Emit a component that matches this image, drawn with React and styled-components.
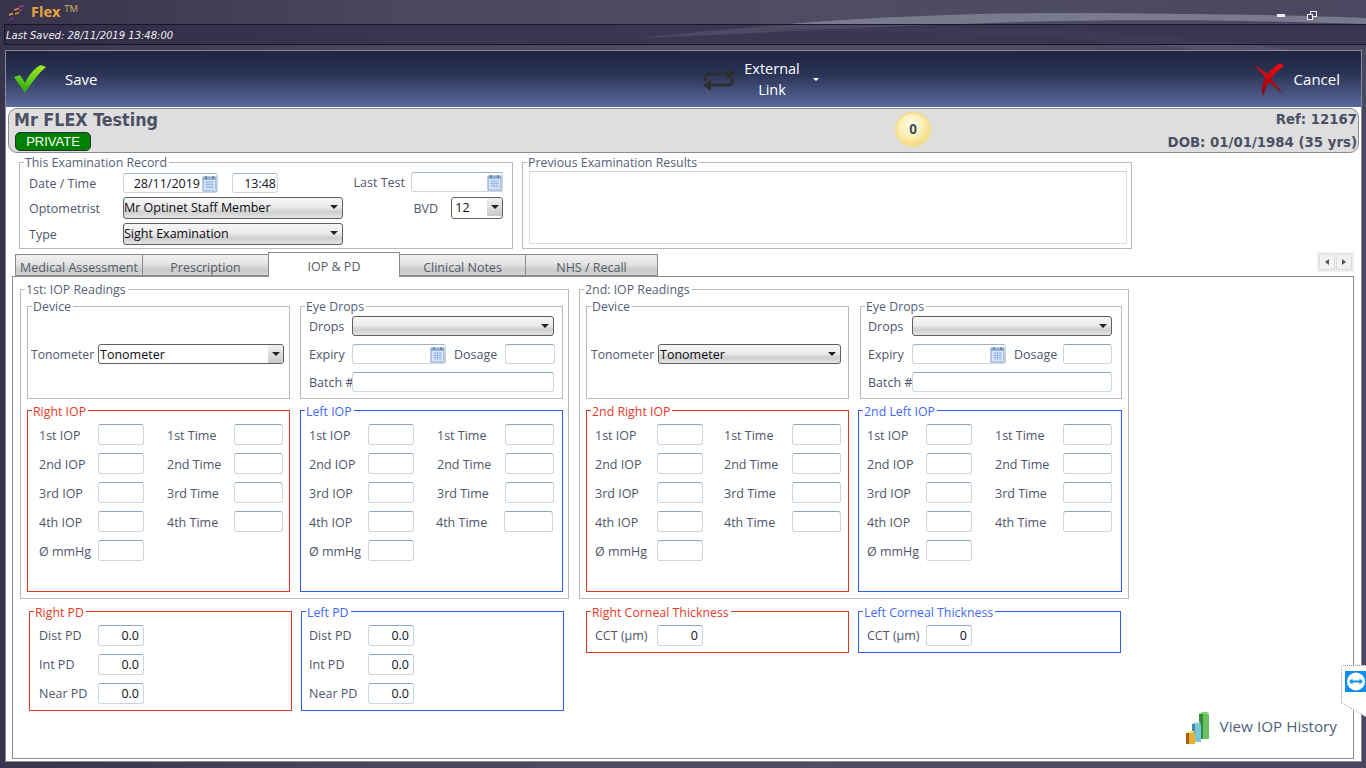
import React from "react";
import styled, { createGlobalStyle } from "styled-components";

const Global = createGlobalStyle`
  html, body { margin: 0; padding: 0; width: 1366px; height: 768px; overflow: hidden; background: #2b2a40; }
  * { box-sizing: border-box; }
  body { font-family: "Open Sans", "Noto Sans", sans-serif; font-size: 12.5px; color: #4d5268; }
`;

const Screen = styled.div`
  position: relative; width: 1366px; height: 768px; overflow: hidden;
  display: flex; flex-direction: column;
  background: linear-gradient(90deg, #37344c 0%, #4a485e 30%, #4f4d62 60%, #4a4860 100%);
`;
const Swoosh = styled.svg`position: absolute; left: 0; top: 0; pointer-events: none;`;
const TitleBar = styled.div`
  position: relative; height: 24px; flex: none; display: flex; align-items: center; padding-left: 8px;
`;
const AppName = styled.span`
  margin-left: 6px; font: bold 14.5px/24px "Open Sans", sans-serif; color: #e8a63c;
`;
const Trade = styled.span`
  margin-left: 4px; margin-bottom: 6px; font: 9.5px/10px "Open Sans", sans-serif; color: #d9a860;
`;
const WindowButtons = styled.div`
  margin-left: auto; margin-right: 49px; display: flex; align-items: center; gap: 22px; padding-top: 6px;
`;
const MinimizeMark = styled.span`display: block; width: 8px; height: 3px; background: #f0f0f0;`;
const StatusBar = styled.div`
  position: relative; flex: none; height: 21px; margin: 0 0 0 4px; padding: 1px 0 0 1px;
  border: 1px solid #17172a; border-right: 0;
  background: rgba(46, 42, 72, .6);
  font: italic 10px/19px "DejaVu Sans", sans-serif; color: #f0f0f0;
`;
const Main = styled.div`
  position: relative; flex: none; width: 1357px; height: 712px; margin: 5px 0 0 5px;
  border: 1px solid #8a8a98; background: #fff; display: flex; flex-direction: column;
`;
const Toolbar = styled.div`
  flex: none; height: 56px; display: grid; grid-template-columns: 697px auto 1fr; align-items: center;
  background: linear-gradient(180deg, #1f2540 0%, #2a3354 40%, #5b6a9e 100%);
  color: #fff; font-size: 15px;
`;
const SaveAction = styled.div`display: flex; align-items: center; gap: 18px; padding-left: 8px;`;
const LinkAction = styled.div`display: flex; align-items: center; gap: 4px;`;
const LinkText = styled.div`width: 66px; text-align: center; line-height: 21px; font-size: 14.5px;`;
const Caret = styled.span`
  width: 0; height: 0; border-left: 3px solid transparent; border-right: 3px solid transparent;
  border-top: 3px solid #fff; margin-left: 4px;
`;
const CancelAction = styled.div`display: flex; align-items: center; gap: 10px; justify-self: end; padding-right: 21px;`;

const Patient = styled.div`
  flex: none; margin: 1px 2px 0 2px; height: 45px; border: 1px solid #8c8c8c; border-radius: 9px;
  background: #dedede; display: grid; grid-template-columns: 880px auto 1fr; align-items: start;
  padding: 0 1px 0 5px;
`;
const PatientName = styled.div`
  font: bold 17.75px/22px "DejaVu Sans Condensed", "DejaVu Sans", sans-serif; color: #4b5064;
`;
const PrivateBadge = styled.div`
  width: 76px; height: 19px; margin-top: 1px; margin-left: 1px; background: #008000; border: 1px solid #24352a; border-radius: 5px;
  color: #fff; font: 13px/17px "Liberation Sans", sans-serif; text-align: center;
`;
const Coin = styled.div`
  width: 36px; height: 35px; margin-top: 3px; margin-left: 1px; border-radius: 50%; border: 2px solid #f4e08c;
  background: radial-gradient(circle at 45% 35%, #fffdf0 0%, #fbeeb4 45%, #eecb60 100%);
  font: bold 13.5px/31px "Open Sans", sans-serif; color: #444a5c; text-align: center;
`;
const PatientMeta = styled.div`
  margin-top: -2px; text-align: right; font: bold 14.8px/23px "DejaVu Sans Condensed", "DejaVu Sans", sans-serif; color: #4b5064;
`;

const Body = styled.div`flex: 1; min-height: 0; display: flex; flex-direction: column; padding: 1px 0 0 0;`;
const TopRow = styled.div`flex: none; display: grid; grid-template-columns: 494px 610px; gap: 9px; margin-left: 13px; height: 95px;`;

const Group = styled.fieldset`
  margin: 0 0 0 ${(p) => p.$shift ?? 0}px; min-width: 0; padding: 0 ${(p) => p.$right ?? 0}px 0 ${(p) => p.$left ?? 0}px;
  height: ${(p) => p.$h}px;
  border: 1px solid ${(p) => (p.$tone === "red" ? "#d83a22" : p.$tone === "blue" ? "#2f5cf2" : "#b9b9b9")};
`;
const Legend = styled.legend`
  margin-left: ${(p) => p.$indent ?? 4}px; padding: 0 2px 0 1px; font-size: 12.35px; height: 16px;
  line-height: ${(p) => (p.$low ? 20 : 18)}px;
  color: ${(p) => (p.$tone === "red" ? "#e53a2a" : p.$tone === "blue" ? "#3f68f4" : "#556078")};
`;
const RecordGrid = styled.div`
  display: grid; grid-template-columns: 94px 220px 1fr; grid-template-rows: 20px 22px 22px;
  row-gap: 4px; align-items: center; padding: 3px 9px 0 9px;
`;
const DateTimeCell = styled.div`display: flex; gap: 14px;`;
const SideCell = styled.div`
  display: flex; justify-content: flex-end; align-items: center; gap: ${(p) => p.$gap}px; margin-top: ${(p) => p.$lift ?? 0}px;
`;
const Label = styled.span`white-space: nowrap; color: #4f556c;`;
const IopLabel = styled(Label)`
  padding-top: 2px; margin-left: ${(p) => (p.$nudge ? -1 : 0)}px;
`;
const DeviceLabel = styled(Label)`font-size: 12.2px;`;

const Field = styled.input`
  display: block; width: ${(p) => p.$w}px; height: ${(p) => p.$hh ?? 21}px; padding: 0 4px;
  margin: 0 0 0 ${(p) => (p.$nudge ? -1 : 0)}px;
  border: 1px solid #c9d6e2; border-top-color: #8fa5bb; border-radius: 3px; background: #fff; outline: 0;
  font: 12.5px "Open Sans", sans-serif; color: #10131c; text-align: right;
`;
const DateBox = styled.div`
  width: ${(p) => p.$w}px; height: 20px; display: flex; align-items: center; justify-content: flex-end; gap: 2px;
  padding-right: ${(p) => p.$end ?? 0}px; border: 1px solid #c9d6e2; border-top-color: #9fb3c6; border-radius: 3px; background: #fff;
  font-size: 12.5px; color: #10131c;
`;
const Drop = styled.div`
  width: ${(p) => p.$w}px; height: ${(p) => p.$hh}px; display: flex; align-items: center; overflow: hidden;
  padding: ${(p) => (p.$tight ? "0 0 2px 0" : "0 0 0 1px")}; border: 1px solid #5f5f5f; border-radius: 3px; font-size: 12.5px; color: #0b0b12;
  background: ${(p) => (p.$plain ? "#fff" : "linear-gradient(180deg, #f6f6f6 0%, #ececec 45%, #cfcfcf 70%, #e4e4e4 100%)")};
`;
const DropText = styled.span`flex: 1; white-space: nowrap;`;
const DropArrow = styled.span`
  flex: none; align-self: stretch; width: ${(p) => (p.$boxed ? 15 : 17)}px; display: flex; align-items: center; justify-content: center;
  background: ${(p) => (p.$boxed ? "linear-gradient(180deg, #f2f2f2, #c9c9c9)" : "transparent")};
  &::after { content: ""; border-left: 4px solid transparent; border-right: 4px solid transparent; border-top: 4px solid #222; }
`;

const ResultsBox = styled.div`height: 73px; margin: 1px 4px 0 6px; border: 1px solid #dcdcdc; border-top-color: #cfcfcf;`;

const TabStrip = styled.div`
  position: relative; flex: none; height: 24px; margin: 3px 0 0 9px; padding-right: 7px; display: flex; align-items: flex-end; z-index: 1;
`;
const Tab = styled.div`
  width: ${(p) => p.$w}px; height: ${(p) => (p.$active ? 25 : 22)}px;
  margin: 0 0 ${(p) => (p.$active ? -1 : 0)}px ${(p) => (p.$active ? -1 : 0)}px;
  border: 1px solid #8b8b8b; border-left-width: ${(p) => (p.$first || p.$active ? 1 : 0)}px;
  border-bottom: ${(p) => (p.$active ? "0" : "1px solid #8b8b8b")};
  background: ${(p) => (p.$active ? "#fff" : "linear-gradient(180deg, #f0f0f0 0%, #e4e4e4 45%, #c9c9c9 75%, #d6d6d6 100%)")};
  text-align: center; font-size: 12.5px; line-height: ${(p) => (p.$active ? 28 : 25)}px; color: #555a6a; white-space: nowrap;
`;
const Scrollers = styled.div`
  margin-left: auto; margin-bottom: 4px; display: flex; gap: 1px; background: #eee; padding: 1px; border: 1px solid #eee;
`;
const ScrollButton = styled.div`
  width: 16px; height: 16px; background: #f1f1f1; border: 1px solid #dcdcdc; display: flex; align-items: center; justify-content: center;
  &::after {
    content: ""; border-top: 3px solid transparent; border-bottom: 3px solid transparent;
    ${(p) => (p.$dir === "left" ? "border-right: 4px solid #555;" : "border-left: 4px solid #555;")}
  }
`;
const Panel = styled.div`
  flex: none; width: 1342px; height: 483px; margin-left: 6px; border: 1px solid #8b8b8b; background: #fff;
  padding: 4px 16px 0 7px; display: flex; flex-direction: column;
`;
const Readings = styled.div`display: grid; grid-template-columns: 549px 550px; gap: 10px; flex: none;`;
const ReadingGrid = styled.div`
  display: grid; grid-template-columns: 263px 263px; column-gap: 10px; row-gap: 3px; padding-top: 1px;
`;
const DeviceRow = styled.div`
  display: grid; grid-template-columns: ${(p) => p.$label}px auto; align-items: center; padding: 30px 0 0 ${(p) => p.$pad}px;
`;
const DropsGrid = styled.div`
  display: grid; grid-template-columns: ${(p) => p.$label}px auto; align-items: center; grid-auto-rows: 20px; row-gap: 8px;
  padding: 2px 0 0 ${(p) => p.$pad}px;
`;
const ExpiryCell = styled.div`display: flex; align-items: center;`;
const DosageLabel = styled(Label)`margin-left: 8px; width: ${(p) => p.$w}px;`;
const IopGrid = styled.div`
  display: grid; grid-template-columns: ${(p) => p.$cols}; grid-auto-rows: 21px; row-gap: 8px; align-items: center;
  padding: ${(p) => p.$top ?? 6}px 0 0 ${(p) => p.$pad}px;
`;
const Spacer = styled.span``;
const BelowRow = styled.div`
  flex: none; margin-top: 4px; margin-left: 9px; display: grid; grid-template-columns: 263px 263px 276px 276px; column-gap: 9px;
`;
const ThirdColumn = styled.div`padding-left: 13px;`;
const FourthColumn = styled.div`padding-right: 13px;`;
const HistoryLink = styled.div`
  align-self: flex-end; display: flex; align-items: center; gap: 10px;
  font-size: 15.25px; color: #4f5f7c; white-space: nowrap;
`;
const HistoryText = styled.span`padding-bottom: 3px;`;
const RemoteTab = styled.div`
  position: absolute; right: 0; top: 665px; width: 25px; height: 52px; background: #fff;
  clip-path: polygon(0 0, 100% 0, 100% 100%, 0 74%);
  display: flex; align-items: flex-start; justify-content: flex-end; padding-top: 6px;
`;
const RemoteOutline = styled.svg`position: absolute; left: 0; top: 0;`;

const Calendar = () => (
  <svg width="15" height="17" viewBox="0 0 15 17">
    <rect x="1" y="2" width="13" height="14" fill="#dbe8f8" stroke="#7d9cc4" />
    <rect x="1" y="2" width="13" height="3" fill="#8fb0d8" />
    <path d="M4 1v3M11 1v3" stroke="#556" />
    <path d="M3 7h9M3 9.5h9M3 12h9M5 6v8M7.5 6v8M10 6v8" stroke="#8fb4ea" strokeWidth=".8" />
    <path d="M11 16l3-3v3z" fill="#fff" stroke="#7d9cc4" strokeWidth=".5" />
  </svg>
);

const CheckMark = () => (
  <svg width="33" height="29" viewBox="0 0 33 29">
    <defs>
      <linearGradient id="chk" x1="0.7" y1="0" x2="0.3" y2="1">
        <stop offset="0" stopColor="#9be81f" />
        <stop offset=".6" stopColor="#5bc916" />
        <stop offset="1" stopColor="#2f9a14" />
      </linearGradient>
    </defs>
    <path d="M0 12 L6 10 L11 18 C15 10 20 3 27 0 L32 2 C24 9 17 18 11 28 Z" fill="url(#chk)" />
  </svg>
);

const CrossMark = () => (
  <svg width="30" height="33" viewBox="0 0 30 33">
    <defs>
      <linearGradient id="crs" x1="0" y1="0" x2="0" y2="1">
        <stop offset="0" stopColor="#f20d12" />
        <stop offset="1" stopColor="#8c0205" />
      </linearGradient>
    </defs>
    <path d="M0 2 C5 5 10 8 13 11 C17 7 22 3 26 0 L30 3 C26 6 20 11 17 16 C21 21 25 25 28 30 L24 27 C21 24 18 21 15 19 C12 23 10 28 10 33 C7 29 7 24 11 15 C8 10 4 6 0 2 Z" fill="url(#crs)" />
  </svg>
);

const RepeatMark = () => (
  <svg width="32" height="25" viewBox="0 0 32 25" fill="none">
    <path d="M2.5 14v-3q0-4 4-4H25" stroke="#2e2e30" strokeWidth="3" />
    <path d="M24 1l8 6-8 6z" fill="#2e2e30" />
    <path d="M29.500 11v3q0 4-4 4H7" stroke="#2e2e30" strokeWidth="3" />
    <path d="M8 12l-8 6 8 6z" fill="#2e2e30" />
  </svg>
);

const FlexLogo = () => (
  <svg width="17" height="17" viewBox="0 0 17 17" fill="none" strokeWidth="1.4">
    <path d="M11 3l5-1.500" stroke="#8a3aa0" />
    <path d="M6 6l5-1.500" stroke="#e08a2a" />
    <path d="M11 7l3-1" stroke="#8a3aa0" />
    <path d="M1 11l4-1.500" stroke="#f0a030" />
    <path d="M7 10l4-1.500" stroke="#e08a2a" />
    <path d="M1 16l5-2" stroke="#7a2a90" />
  </svg>
);

const RestoreMark = () => (
  <svg width="10" height="9" viewBox="0 0 10 9" fill="none" stroke="#f0f0f0">
    <rect x="3.500" y=".5" width="6" height="5" />
    <rect x=".5" y="3.500" width="5" height="5" fill="#4a4860" />
  </svg>
);

const BarsMark = () => (
  <svg width="24" height="33" viewBox="0 0 24 33">
    <path d="M13 3l3-2h7l-2 2z" fill="#7fcf6a" />
    <rect x="13" y="3" width="4" height="25" fill="#2f8a3a" />
    <rect x="17" y="3" width="6" height="25" fill="#6cc060" />
    <path d="M6 13l3-2h6l-2 2z" fill="#a6dcec" />
    <rect x="6" y="13" width="3" height="18" fill="#3c8fa8" />
    <rect x="9" y="13" width="6" height="18" fill="#7cc4d8" />
    <path d="M0 22l3-2h6l-2 2z" fill="#f6ec70" />
    <rect x="0" y="22" width="3" height="11" fill="#a85a18" />
    <rect x="3" y="22" width="6" height="11" fill="#e8b030" />
  </svg>
);

const TeamMark = () => (
  <svg width="21" height="21" viewBox="0 0 21 21">
    <rect width="21" height="21" fill="#0e8ee9" />
    <circle cx="11" cy="10.500" r="9" fill="#fff" />
    <path d="M4 10.500l3.500-3v2h7v-2l3.500 3-3.500 3v-2h-7v2z" fill="#0e8ee9" />
  </svg>
);

const SIDES = {
  r1: { title: "Right IOP", tone: "red", pad: 11, cols: "59px 46px 23px 67px 49px" },
  l1: { title: "Left IOP", tone: "blue", pad: 8, cols: "59px 46px 23px 68px 49px", lastShift: true },
  r2: { title: "2nd Right IOP", tone: "red", pad: 8, cols: "62px 46px 21px 68px 49px" },
  l2: { title: "2nd Left IOP", tone: "blue", pad: 8, cols: "59px 46px 23px 68px 49px", shift: -1 },
};

const ORD = ["1st", "2nd", "3rd", "4th"];

function IopBox({ side }) {
  const s = SIDES[side];
  return (
    <Group $h={190} $tone={s.tone} $shift={s.shift}>
      <Legend $tone={s.tone} $low>{s.title}</Legend>
      <IopGrid $cols={s.cols} $pad={s.pad}>
        {ORD.map((o) => {
          const nudge = s.lastShift && o === "4th";
          return (
            <React.Fragment key={o}>
              <IopLabel>{o} IOP</IopLabel>
              <Field $w={46} readOnly />
              <Spacer />
              <IopLabel $nudge={nudge}>{o} Time</IopLabel>
              <Field $w={49} $nudge={nudge} readOnly />
            </React.Fragment>
          );
        })}
        <IopLabel>Ø mmHg</IopLabel>
        <Field $w={46} readOnly />
      </IopGrid>
    </Group>
  );
}

function PdBox({ title, tone, pad }) {
  return (
    <Group $h={108} $tone={tone}>
      <Legend $tone={tone} $low>{title}</Legend>
      <IopGrid $cols="59px 46px" $pad={pad} $top={6}>
        {["Dist PD", "Int PD", "Near PD"].map((n) => (
          <React.Fragment key={n}>
            <Label>{n}</Label>
            <Field $w={46} readOnly value="0.0" />
          </React.Fragment>
        ))}
      </IopGrid>
    </Group>
  );
}

function CctBox({ title, tone, col, pad }) {
  return (
    <Group $h={50} $tone={tone}>
      <Legend $tone={tone} $low>{title}</Legend>
      <IopGrid $cols={`${col}px 46px`} $pad={pad} $top={6}>
        <Label>CCT (µm)</Label>
        <Field $w={46} readOnly value="0" />
      </IopGrid>
    </Group>
  );
}

function Device({ label, w, plain, pad }) {
  return (
    <Group $h={101}>
      <Legend>Device</Legend>
      <DeviceRow $label={label} $pad={pad}>
        <DeviceLabel>Tonometer</DeviceLabel>
        <Drop $w={w} $hh={20} $plain={plain}>
          <DropText>Tonometer</DropText>
          <DropArrow $boxed={plain} />
        </Drop>
      </DeviceRow>
    </Group>
  );
}

function EyeDrops({ pad, label, dropW, dateW, dosageW, fieldW, batchW, shift }) {
  return (
    <Group $h={101} $shift={shift}>
      <Legend>Eye Drops</Legend>
      <DropsGrid $pad={pad} $label={label}>
        <Label>Drops</Label>
        <Drop $w={dropW} $hh={20}>
          <DropText />
          <DropArrow />
        </Drop>
        <Label>Expiry</Label>
        <ExpiryCell>
          <DateBox $w={dateW}>
            <Calendar />
          </DateBox>
          <DosageLabel $w={dosageW}>Dosage</DosageLabel>
          <Field $w={fieldW} $hh={20} readOnly />
        </ExpiryCell>
        <Label>Batch #</Label>
        <Field $w={batchW} $hh={20} readOnly />
      </DropsGrid>
    </Group>
  );
}

export default function App() {
  return (
    <Screen>
      <Global />
      <Swoosh width="1366" height="60" viewBox="0 0 1366 60" fill="none">
        <path d="M640 38 C800 20 950 12 1100 13 C1200 14 1300 15 1366 18 L1366 24 C1250 20 1100 18 960 24 C850 28 740 34 640 38 Z" fill="#8a8a9c" opacity=".75" />
        <path d="M760 31 C900 24 1120 26 1290 50 L1200 50 C1100 38 950 30 760 31 Z" fill="#5d5a78" opacity=".5" />
      </Swoosh>
      <TitleBar>
        <FlexLogo />
        <AppName>Flex</AppName>
        <Trade>TM</Trade>
        <WindowButtons>
          <MinimizeMark />
          <RestoreMark />
        </WindowButtons>
      </TitleBar>
      <StatusBar>Last Saved: 28/11/2019 13:48:00</StatusBar>
      <Main>
        <Toolbar>
          <SaveAction>
            <CheckMark />
            <span>Save</span>
          </SaveAction>
          <LinkAction>
            <RepeatMark />
            <LinkText>
              External
              <br />
              Link
            </LinkText>
            <Caret />
          </LinkAction>
          <CancelAction>
            <CrossMark />
            <span>Cancel</span>
          </CancelAction>
        </Toolbar>
        <Patient>
          <div>
            <PatientName>Mr FLEX Testing</PatientName>
            <PrivateBadge>PRIVATE</PrivateBadge>
          </div>
          <Coin>0</Coin>
          <PatientMeta>
            Ref: 12167
            <br />
            DOB: 01/01/1984 (35 yrs)
          </PatientMeta>
        </Patient>
        <Body>
          <TopRow>
            <Group $h={95}>
              <Legend>This Examination Record</Legend>
              <RecordGrid>
                <Label>Date / Time</Label>
                <DateTimeCell>
                  <DateBox $w={95}>
                    28/11/2019
                    <Calendar />
                  </DateBox>
                  <DateBox $w={46} $end={1}>13:48</DateBox>
                </DateTimeCell>
                <SideCell $gap={6} $lift={-2}>
                  <Label>Last Test</Label>
                  <DateBox $w={92}>
                    <Calendar />
                  </DateBox>
                </SideCell>
                <Label>Optometrist</Label>
                <Drop $w={220} $hh={22} $tight>
                  <DropText>Mr Optinet Staff Member</DropText>
                  <DropArrow />
                </Drop>
                <SideCell $gap={13}>
                  <Label>BVD</Label>
                  <Drop $w={52} $hh={22} $plain $tight>
                    <DropText>&nbsp;12</DropText>
                    <DropArrow $boxed />
                  </Drop>
                </SideCell>
                <Label>Type</Label>
                <Drop $w={220} $hh={22} $tight>
                  <DropText>Sight Examination</DropText>
                  <DropArrow />
                </Drop>
              </RecordGrid>
            </Group>
            <Group $h={95}>
              <Legend>Previous Examination Results</Legend>
              <ResultsBox />
            </Group>
          </TopRow>
          <TabStrip>
            <Tab $w={128} $first>Medical Assessment</Tab>
            <Tab $w={126}>Prescription</Tab>
            <Tab $w={132} $active>IOP &amp; PD</Tab>
            <Tab $w={126}>Clinical Notes</Tab>
            <Tab $w={132}>NHS / Recall</Tab>
            <Scrollers>
              <ScrollButton $dir="left" />
              <ScrollButton $dir="right" />
            </Scrollers>
          </TabStrip>
          <Panel>
            <Readings>
              <Group $h={318} $left={6}>
                <Legend $indent={-2}>1st: IOP Readings</Legend>
                <ReadingGrid>
                  <Device label={67} w={186} plain pad={3} />
                  <EyeDrops pad={8} label={43} dropW={202} dateW={94} dosageW={51} fieldW={50} batchW={202} />
                  <IopBox side="r1" />
                  <IopBox side="l1" />
                </ReadingGrid>
              </Group>
              <Group $h={318} $left={6}>
                <Legend $indent={-2}>2nd: IOP Readings</Legend>
                <ReadingGrid>
                  <Device label={67} w={183} pad={4} />
                  <EyeDrops shift={1} pad={7} label={44} dropW={200} dateW={94} dosageW={49} fieldW={49} batchW={200} />
                  <IopBox side="r2" />
                  <IopBox side="l2" />
                </ReadingGrid>
              </Group>
            </Readings>
            <BelowRow>
              <PdBox title="Right PD" tone="red" pad={9} />
              <PdBox title="Left PD" tone="blue" pad={7} />
              <ThirdColumn>
                <CctBox title="Right Corneal Thickness" tone="red" col={62} pad={8} />
              </ThirdColumn>
              <FourthColumn>
                <CctBox title="Left Corneal Thickness" tone="blue" col={59} pad={8} />
              </FourthColumn>
            </BelowRow>
            <HistoryLink>
              <BarsMark />
              <HistoryText>View IOP History</HistoryText>
            </HistoryLink>
          </Panel>
        </Body>
      </Main>
      <RemoteTab>
        <RemoteOutline width="25" height="52" viewBox="0 0 25 52" fill="none">
          <path d="M25 .5H3Q.5.500.5 3V38L25 51.500" stroke="#9a9a9a" strokeDasharray="1 1" />
        </RemoteOutline>
        <TeamMark />
      </RemoteTab>
    </Screen>
  );
}
